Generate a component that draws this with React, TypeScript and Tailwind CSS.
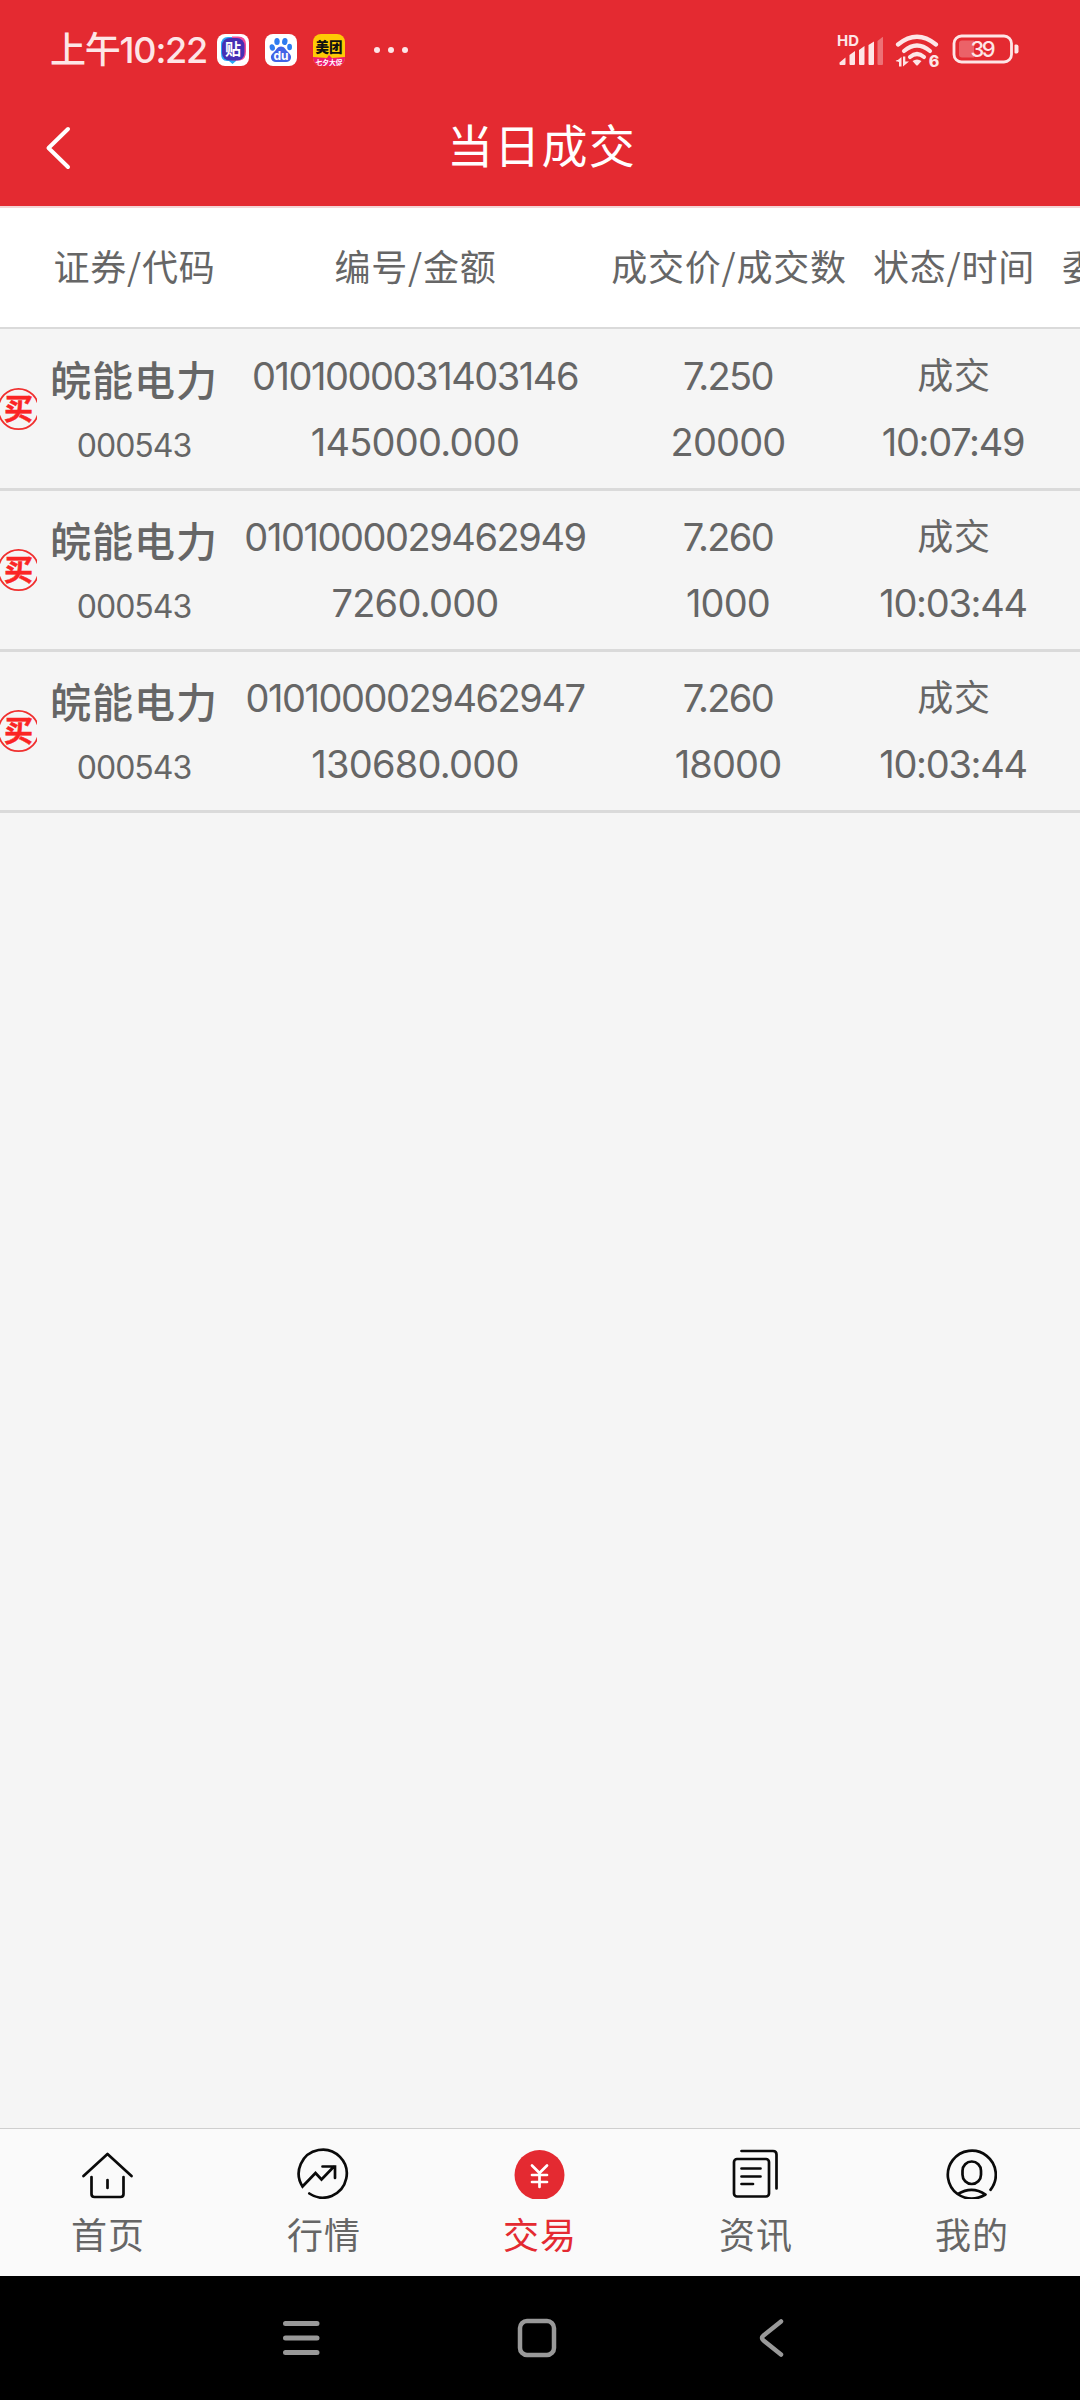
import { ReactNode } from "react";

interface Deal {
  name: string,
  code: string,
  serial: string,
  amount: string,
  price: string,
  count: string,
  status: string,
  time: string,
}

const deals: Deal[] = [
  { name: "皖能电力", code: "000543", serial: "0101000031403146", amount: "145000.000", price: "7.250", count: "20000", status: "成交", time: "10:07:49" },
  { name: "皖能电力", code: "000543", serial: "0101000029462949", amount: "7260.000", price: "7.260", count: "1000", status: "成交", time: "10:03:44" },
  { name: "皖能电力", code: "000543", serial: "0101000029462947", amount: "130680.000", price: "7.260", count: "18000", status: "成交", time: "10:03:44" },
];

const StatusBar = () => (
  <div className="h-[86px] pt-[14px] pl-[50px] pr-[61px] flex items-start justify-between text-[#fde6e7]">
    <div className="flex items-center h-[72px]">
      <span className="w-[167px] text-[36px] font-medium leading-[72px] tracking-[-1.2px] whitespace-nowrap">上午10:22</span>
      {/* tieba */}
      <svg viewBox="0 0 32 32" className="w-8 h-8">
        <rect width="32" height="32" rx="8" fill="#fff" />
        <path d="M11 3h8v24l-3.500 3-3.500-3h-2q-6 0-6-8v-8q0-8 7-8z" fill="#2aa5f5" />
        <path d="M15 2.500h6q8 0 8 8v7q0 8-6 9h-8z" fill="#ef4b9c" />
        <rect x="5" y="4" width="22.500" height="22.500" rx="7.500" fill="#4630b4" />
        <text x="16" y="21" textAnchor="middle" fontSize="16" fontWeight="700" fill="#fff">贴</text>
      </svg>
      {/* baidu */}
      <svg viewBox="0 0 32 32" className="w-8 h-8 ml-4">
        <rect width="32" height="32" rx="8" fill="#fff" />
        <g fill="#2e7bf0">
          <ellipse cx="12" cy="7.500" rx="2.700" ry="3.600" />
          <ellipse cx="19.800" cy="7.500" rx="2.700" ry="3.600" transform="rotate(10 19.800 7.500)" />
          <ellipse cx="7.300" cy="13.500" rx="2.600" ry="3.300" transform="rotate(-15 7.300 13.500)" />
          <ellipse cx="24.600" cy="13" rx="2.400" ry="3.300" />
        </g>
        <path d="M16 12.500c3.500 0 4.500 3 6.500 5s4 3.500 3.500 6.500-3 4.500-6 4h-8c-3 .5-5.500-1-6-4s1.500-4.500 3.500-6.500 3-5 6.500-5z" fill="#4263e6" />
        <text x="16" y="26.300" textAnchor="middle" fontSize="12" fontWeight="700" fill="#fff">du</text>
      </svg>
      {/* meituan */}
      <svg viewBox="0 0 32 32" className="w-8 h-8 ml-4">
        <clipPath id="mt"><rect width="32" height="32" rx="8" /></clipPath>
        <g clipPath="url(#mt)">
          <rect width="32" height="32" fill="#ffca05" />
          <path d="M0 23l14 1 2-3 3 3 13-1v9H0z" fill="#ee1b6e" />
          <text x="16" y="17.500" textAnchor="middle" fontSize="13.500" fontWeight="900" fill="#111">美团</text>
          <text x="16" y="30.500" textAnchor="middle" fontSize="6.800" fontWeight="700" fill="#fff">七夕大促</text>
        </g>
      </svg>
      <div className="flex gap-2 ml-[29px]">
        <i className="w-1.5 h-1.5 rounded-full bg-[#fde6e7]" />
        <i className="w-1.5 h-1.5 rounded-full bg-[#fde6e7]" />
        <i className="w-1.5 h-1.5 rounded-full bg-[#fde6e7]" />
      </div>
    </div>
    <svg viewBox="0 0 182 38" className="w-[182px] h-[38px] mt-5" fill="currentColor">
      {/* signal */}
      <text x="0" y="12" fontSize="15" fontWeight="700" textLength="22" lengthAdjust="spacingAndGlyphs">HD</text>
      <path d="M2.500 28.500l6-5v6.500q0 1-1 1h-4q-1 0-1-1zM12.500 21l5.500-4v13q0 1-1 1h-3.500q-1 0-1-1zM22 16l5.500-4v18q0 1-1 1H23q-1 0-1-1zM31.500 11l5.500-3.500V30q0 1-1 1h-3.500q-1 0-1-1z" />
      <path d="M40.500 7l5-4q.5-.3.5.5V30q0 1-1 1h-3.500q-1 0-1-1z" opacity=".38" />
      {/* wifi */}
      <g fill="none" stroke="currentColor" strokeWidth="4.200" strokeLinecap="round">
        <path d="M61 10.500q19-15.500 38 0" />
        <path d="M67 17q13-11 26 0" />
        <path d="M73 23q7-6 14 0" />
      </g>
      <path d="M75.500 27q4.500-3 9 0l-3.500 4q-1 1-2 0z" />
      <path d="M59 27.500l5.500-4.500v9.500H62v-5zM66 22.500h2.300v5l3.700 0-6 5zM58.500 26h4l0 2.500" />
      <text x="91.800" y="32.500" fontSize="16" fontWeight="800">6</text>
      {/* battery */}
      <rect x="117" y="2" width="57.500" height="26" rx="7.500" fill="none" stroke="currentColor" strokeWidth="2.800" />
      <path d="M125 6.500h12v17h-12q-3 0-3-3V9.500q0-3 3-3z" opacity=".3" />
      <path d="M178.500 10.500h1q2 0 2 2v5q0 2-2 2h-1q-1 0-1-1v-7q0-1 1-1z" />
      <text x="146" y="22.600" textAnchor="middle" fontSize="22" fontWeight="500" textLength="25">39</text>
    </svg>
  </div>
);

const BuyBadge = () => (
  <svg viewBox="0 0 37 44" className="w-[37px] h-11 mt-[57px]">
    <circle cx="18.500" cy="22" r="20.200" fill="none" stroke="#f0302f" strokeWidth="1.800" />
    <text x="18.500" y="32.500" textAnchor="middle" fontSize="29" fontWeight="700" fill="#fb2424" stroke="#fb2424" strokeWidth=".5">买</text>
  </svg>
);

const DealRow = ({ deal }: { deal: Deal }) => (
  <div className="grid grid-cols-[37px_194px_368px_258px_192px] h-[161px] border-b-[3px] border-[#dadada] text-center text-[38px] leading-[66px] whitespace-nowrap">
    <BuyBadge />
    <div className="pt-[15px]">
      <div className="text-[41px] font-medium tracking-[1px] font-['Noto_Sans_CJK_SC',sans-serif]">{deal.name}</div>
      <div className="text-[32px] leading-[70px] tracking-[-1px]">{deal.code}</div>
    </div>
    <div className="pt-[13px]">
      <div className="tracking-[-1.45px]">{deal.serial}</div>
      <div className="tracking-[-0.75px]">{deal.amount}</div>
    </div>
    <div className="pt-[13px]">
      <div className="tracking-[-1.6px]">{deal.price}</div>
      <div className="tracking-[-0.85px]">{deal.count}</div>
    </div>
    <div className="pt-[13px]">
      <div className="text-[36px] tracking-[0.8px] pl-0.5">{deal.status}</div>
      <div className="tracking-[-1.3px]">{deal.time}</div>
    </div>
  </div>
);

interface TabProps {
  label: string,
  active?: boolean,
  children: ReactNode,
}

const Tab = ({ label, active, children }: TabProps) => (
  <div className="flex-1 flex flex-col items-center pt-[18px]">
    <svg viewBox="0 0 52 52" className="w-[52px] h-[52px] mr-0.5" fill="none" stroke="#0a0a0a" strokeWidth="2.700" strokeLinecap="round" strokeLinejoin="round">
      {children}
    </svg>
    <span className={active ? "text-[36px] leading-[72px] mt-px tracking-[1px] text-[#e42a31]" : "text-[36px] leading-[72px] mt-px tracking-[1px] text-[#666]"}>{label}</span>
  </div>
);

const App = () => {
  return (
    <div className="w-[1080px] h-[2400px] overflow-hidden flex flex-col bg-[#f5f5f5] text-[#666] font-['Inter','Noto_Sans_CJK_SC',sans-serif]">
      <header className="h-[208px] bg-[#e42a31] border-b-2 border-[#f3d5d7]">
        <StatusBar />
        <div className="grid grid-cols-[120px_1fr_120px] items-center h-[120px] text-white">
          <svg viewBox="0 0 26 44" className="w-[26px] h-11 ml-[45px] mt-1" fill="none" stroke="currentColor" strokeWidth="4" strokeLinecap="round" strokeLinejoin="round">
            <path d="M23 3L3.500 22 23 41" />
          </svg>
          <h1 className="text-center text-[46px] leading-[120px] tracking-[1.2px] pl-[3px]">当日成交</h1>
        </div>
      </header>

      <div className="grid grid-cols-[37px_194px_368px_258px_192px_200px] h-[121px] bg-white border-b-2 border-[#dadada] text-center text-[36px] leading-[114px] tracking-[0.8px] whitespace-nowrap font-['Noto_Sans_CJK_SC',sans-serif]">
        <span />
        <span className="pl-px">证券/代码</span>
        <span className="pl-px">编号/金额</span>
        <span className="pl-0.5">成交价/成交数</span>
        <span className="pl-0.5">状态/时间</span>
        <span className="text-left pl-[13px]">委</span>
      </div>

      <main className="flex-1 pt-px">
        {deals.map((deal) => <DealRow key={deal.serial} deal={deal} />)}
      </main>

      <nav className="h-[148px] bg-[#fafafa] border-t border-[#cfcfcf] flex">
        <Tab label="首页">
          <path d="M2.500 29L26.500 7 50.500 29M10.500 30v17q0 3 3 3h26q3 0 3-3V30M26.500 33v8" />
        </Tab>
        <Tab label="行情">
          <path d="M12.300 46.500A24 24 0 1 0 5.500 39.500L18.500 26l6 6.500L37 19.500M25.500 19.500H38V31" strokeLinejoin="miter" />
        </Tab>
        <Tab label="交易" active>
          <circle cx="26.500" cy="28" r="25" fill="#e42a31" stroke="none" />
          <path d="M19 18.500l7.500 7.500 7.500-7.500M19 28h15M19 35h15M26.500 26v14" stroke="#fff" />
        </Tab>
        <Tab label="资讯">
          <rect x="5" y="12" width="35" height="37.500" rx="3" />
          <path d="M12.500 4H44q3.500 0 3.500 3.500V41.500M12.500 21.500h19M12.500 29.500h19M12.500 37h11.500" />
        </Tab>
        <Tab label="我的">
          <path d="M45.500 42.800A24 24 0 1 0 12.500 47Q26 56 40.500 47.500Q27 38.500 13 47" />
          <rect x="17.500" y="14.500" width="18.500" height="22.500" rx="9.200" />
        </Tab>
      </nav>

      <div className="h-[124px] bg-black flex pl-[281px] pt-10">
        <svg viewBox="0 0 40 44" className="w-10 h-11" stroke="#999" strokeWidth="5" strokeLinecap="round">
          <path d="M4.500 7.500H36M4.500 22H36M4.500 36.500H36" />
        </svg>
        <svg viewBox="0 0 40 44" className="w-10 h-11 ml-[196px]" fill="none" stroke="#999" strokeWidth="4.500">
          <rect x="3" y="5" width="34" height="34" rx="7" />
        </svg>
        <svg viewBox="0 0 26 44" className="w-[26px] h-11 ml-[201px]" fill="none" stroke="#999" strokeWidth="4.500" strokeLinecap="round">
          <path d="M23 5.500L5.500 19.500Q2.500 22 5.500 24.500L23 38.500" />
        </svg>
      </div>
    </div>
  );
};

export default App;
